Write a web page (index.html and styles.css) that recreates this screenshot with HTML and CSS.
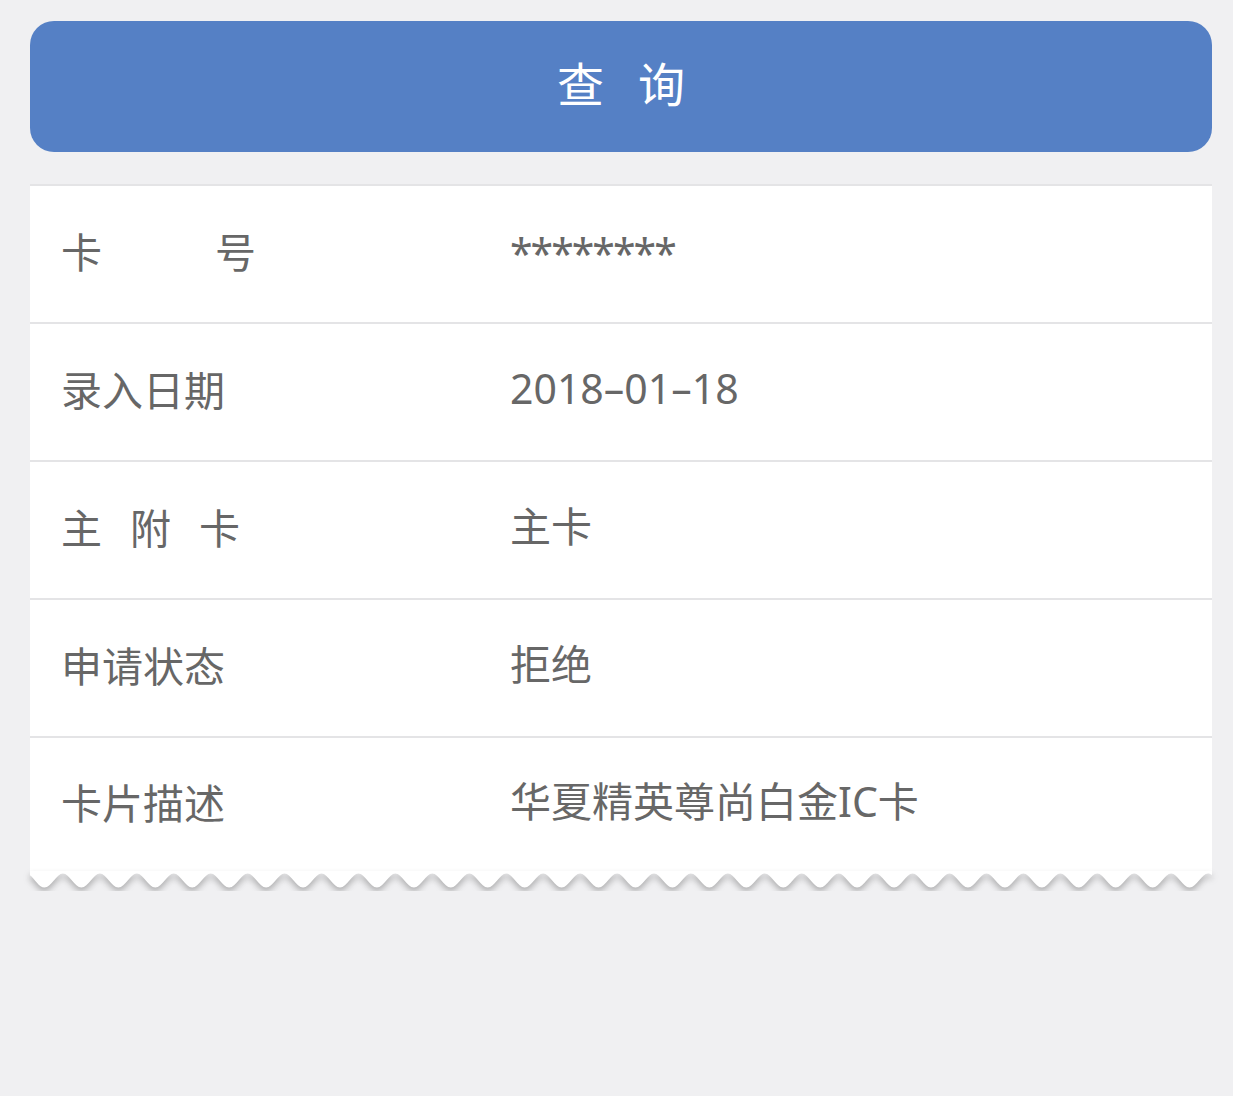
FILE: index.html
```html
<!DOCTYPE html>
<html lang="zh-CN">
<head>
<meta charset="utf-8">
<title>查询</title>
<link rel="stylesheet" href="styles.css">
</head>
<body>
<div class="page">
  <button class="query-btn"><span>查</span><span>询</span></button>
  <div class="card">
    <div class="rows">
      <div class="row">
        <div class="label sp-wide">卡号</div>
        <div class="value stars">********</div>
      </div>
      <div class="row">
        <div class="label">录入日期</div>
        <div class="value">2018–01–18</div>
      </div>
      <div class="row">
        <div class="label sp-mid">主附卡</div>
        <div class="value">主卡</div>
      </div>
      <div class="row">
        <div class="label">申请状态</div>
        <div class="value">拒绝</div>
      </div>
      <div class="row last">
        <div class="label">卡片描述</div>
        <div class="value">华夏精英尊尚白金IC卡</div>
      </div>
    </div>
    <svg class="wave" width="1182" height="20" viewBox="0 0 1182 20">
      <path fill="#ffffff" d="M-4 0 V2.5 c6.5 0 11.5 14 18.47 14 c6.97 0 11.97 -14 18.47 -14 c6.5 0 11.5 14 18.47 14 c6.97 0 11.97 -14 18.47 -14 c6.5 0 11.5 14 18.47 14 c6.97 0 11.97 -14 18.47 -14 c6.5 0 11.5 14 18.47 14 c6.97 0 11.97 -14 18.47 -14 c6.5 0 11.5 14 18.47 14 c6.97 0 11.97 -14 18.47 -14 c6.5 0 11.5 14 18.47 14 c6.97 0 11.97 -14 18.47 -14 c6.5 0 11.5 14 18.47 14 c6.97 0 11.97 -14 18.47 -14 c6.5 0 11.5 14 18.47 14 c6.97 0 11.97 -14 18.47 -14 c6.5 0 11.5 14 18.47 14 c6.97 0 11.97 -14 18.47 -14 c6.5 0 11.5 14 18.47 14 c6.97 0 11.97 -14 18.47 -14 c6.5 0 11.5 14 18.47 14 c6.97 0 11.97 -14 18.47 -14 c6.5 0 11.5 14 18.47 14 c6.97 0 11.97 -14 18.47 -14 c6.5 0 11.5 14 18.47 14 c6.97 0 11.97 -14 18.47 -14 c6.5 0 11.5 14 18.47 14 c6.97 0 11.97 -14 18.47 -14 c6.5 0 11.5 14 18.47 14 c6.97 0 11.97 -14 18.47 -14 c6.5 0 11.5 14 18.47 14 c6.97 0 11.97 -14 18.47 -14 c6.5 0 11.5 14 18.47 14 c6.97 0 11.97 -14 18.47 -14 c6.5 0 11.5 14 18.47 14 c6.97 0 11.97 -14 18.47 -14 c6.5 0 11.5 14 18.47 14 c6.97 0 11.97 -14 18.47 -14 c6.5 0 11.5 14 18.47 14 c6.97 0 11.97 -14 18.47 -14 c6.5 0 11.5 14 18.47 14 c6.97 0 11.97 -14 18.47 -14 c6.5 0 11.5 14 18.47 14 c6.97 0 11.97 -14 18.47 -14 c6.5 0 11.5 14 18.47 14 c6.97 0 11.97 -14 18.47 -14 c6.5 0 11.5 14 18.47 14 c6.97 0 11.97 -14 18.47 -14 c6.5 0 11.5 14 18.47 14 c6.97 0 11.97 -14 18.47 -14 c6.5 0 11.5 14 18.47 14 c6.97 0 11.97 -14 18.47 -14 c6.5 0 11.5 14 18.47 14 c6.97 0 11.97 -14 18.47 -14 c6.5 0 11.5 14 18.47 14 c6.97 0 11.97 -14 18.47 -14 c6.5 0 11.5 14 18.47 14 c6.97 0 11.97 -14 18.47 -14 c6.5 0 11.5 14 18.47 14 c6.97 0 11.97 -14 18.47 -14 c6.5 0 11.5 14 18.47 14 c6.97 0 11.97 -14 18.47 -14 c6.5 0 11.5 14 18.47 14 c6.97 0 11.97 -14 18.47 -14 c6.5 0 11.5 14 18.47 14 c6.97 0 11.97 -14 18.47 -14 c6.5 0 11.5 14 18.47 14 c6.97 0 11.97 -14 18.47 -14 c6.5 0 11.5 14 18.47 14 c6.97 0 11.97 -14 18.47 -14 V0 Z"/>
    </svg>
  </div>
</div>
</body>
</html>
```
FILE: styles.css
```css
html, body {
  margin: 0;
  padding: 0;
  background: #f0f0f2;
}
body {
  font-family: "Liberation Sans", "Noto Sans CJK SC", sans-serif;
  color: #666666;
}
.page {
  width: 1182px;
  margin-left: 30px;
  padding-top: 21px;
}
.query-btn {
  display: flex;
  justify-content: center;
  align-items: center;
  gap: 34px;
  width: 100%;
  height: 131px;
  border: none;
  border-radius: 24px;
  background: #5580c5;
  color: #ffffff;
  font-family: "Noto Sans CJK SC", sans-serif;
  font-size: 47px;
  line-height: 1;
  padding: 0 0 10px 0;
}
.card {
  margin-top: 32px;
}
.rows {
  background: #ffffff;
}
.row {
  display: grid;
  grid-template-columns: 449px 1fr;
  align-items: center;
  box-sizing: border-box;
  height: 138px;
  padding-left: 31px;
  padding-bottom: 8px;
  border-top: 2px solid #e4e4e6;
}
.row.last {
  height: 136px;
}
.label, .value {
  font-size: 41px;
  line-height: 1;
  white-space: nowrap;
  color: #676767;
}
.label {
  font-family: "Noto Sans CJK SC", sans-serif;
}
.sp-wide { letter-spacing: 113px; }
.sp-mid { letter-spacing: 28px; }
.value {
  font-family: "Noto Sans", "Noto Sans CJK SC", sans-serif;
}
.stars {
  letter-spacing: -2px;
  margin-top: 6px;
}
.wave {
  display: block;
  width: 1182px;
  height: 20px;
  margin-top: -1px;
  overflow: hidden;
  filter: drop-shadow(0 4px 3px rgba(80, 80, 80, 0.4));
}
```
